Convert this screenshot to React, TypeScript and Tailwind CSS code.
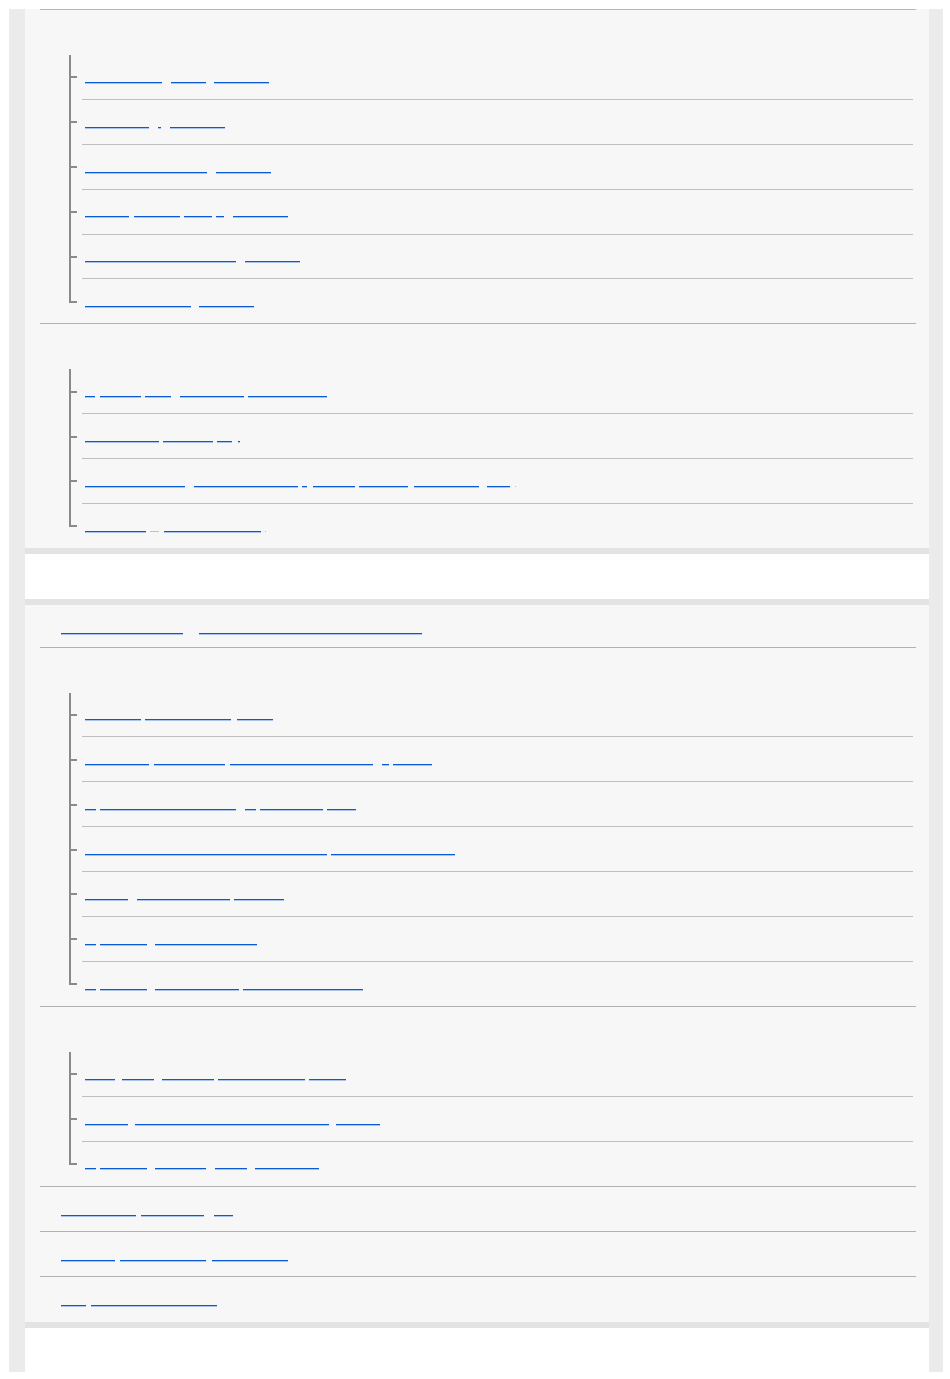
import React from "react";

type Seg = [number, number, number?];

function Underlines({ segs, origin }: { segs: Seg[]; origin: number }) {
  let prev = origin;
  return (
    <div className="flex h-px">
      {segs.map(([a, b, faint], i) => {
        const ml = a - prev;
        prev = b;
        return (
          <span
            key={i}
            className={
              faint
                ? "block h-px shrink-0 bg-[#a9c3ec]"
                : "block h-px shrink-0 bg-[#0a5ad3] shadow-[0_1px_0_#a9c5ef]"
            }
            style={{ marginLeft: ml, width: b - a }}
          />
        );
      })}
    </div>
  );
}

function TreeRow({ segs, last }: { segs: Seg[]; last: boolean }) {
  return (
    <div className={last ? "flex h-[43.9px]" : "flex h-[44.9px]"}>
      <div className="relative w-[42px] shrink-0">
        <div
          className={
            last
              ? "absolute left-[29px] top-0 h-[23.3px] w-[2px] bg-[#8a8a8a]"
              : "absolute left-[29px] top-0 bottom-0 w-[2px] bg-[#8a8a8a]"
          }
        />
        <div className="absolute left-[31px] top-[21.3px] h-[2px] w-[6px] bg-[#8a8a8a]" />
      </div>
      <div
        className={
          last ? "mr-[2.5px] flex-1" : "mr-[2.5px] flex-1 border-b border-[#bebebe]"
        }
      >
        <div className="pt-[26.8px]">
          <Underlines segs={segs} origin={82} />
        </div>
      </div>
    </div>
  );
}

function Section({ rows, border }: { rows: Seg[][]; border: boolean }) {
  return (
    <div className={border ? "border-b border-[#b2b2b2]" : ""}>
      <div className="h-[45px]" />
      {rows.map((r, i) => (
        <TreeRow key={i} segs={r} last={i === rows.length - 1} />
      ))}
    </div>
  );
}

function LinkItem({
  segs,
  border,
  h,
}: {
  segs: Seg[];
  border: boolean;
  h: "a" | "n" | "l";
}) {
  const hc = h === "a" ? "h-[42.7px]" : h === "l" ? "h-[45.3px]" : "h-[45px]";
  return (
    <div className={border ? `${hc} border-b border-[#b2b2b2]` : hc}>
      <div className="pt-[28.3px]">
        <Underlines segs={segs} origin={40} />
      </div>
    </div>
  );
}

const sec1: Seg[][] = [
  [[85, 162], [171, 206], [214, 269]],
  [[85, 149], [158, 161], [170, 225]],
  [[85, 207], [216, 271]],
  [[85, 129], [134, 180], [184, 212], [216, 224], [233, 288]],
  [[85, 236], [245, 300]],
  [[85, 191], [199, 254]],
];

const sec2: Seg[][] = [
  [[85, 95], [100, 141], [145, 171], [180, 244], [248, 327]],
  [[85, 159], [163, 213], [217, 232], [238, 240]],
  [[85, 185], [194, 298], [302, 307], [313, 355], [359, 408], [414, 479], [487, 510], [515, 516, 1]],
  [[85, 146], [150, 159, 1], [164, 261], [265, 266, 1]],
];

const sec3: Seg[][] = [
  [[85, 141], [145, 231], [237, 273]],
  [[85, 149], [154, 225], [230, 373], [382, 389], [393, 432]],
  [[85, 96], [100, 236], [245, 256], [260, 323], [327, 356]],
  [[85, 327], [331, 455]],
  [[85, 128], [137, 230], [234, 284]],
  [[85, 96], [100, 147], [155, 257]],
  [[85, 96], [100, 147], [155, 239], [243, 363]],
];

const sec4: Seg[][] = [
  [[85, 115], [122, 154], [162, 214], [218, 305], [309, 346]],
  [[85, 128], [135, 329], [336, 380]],
  [[85, 96], [100, 147], [155, 206], [215, 247], [255, 319]],
];

export default function App() {
  return (
    <div className="min-h-[1379px] w-[950px] bg-white pt-[9px] font-['Liberation_Sans',Arial,sans-serif]">
      <div className="ml-[9px] h-[1363px] w-[934px] border-l-[16px] border-r-[14px] border-[#ebebeb] bg-white">
        <div className="border-b-[6px] border-[#e3e3e3] bg-[#f7f7f7] pl-[15px] pr-[13.5px]">
          <div className="h-px bg-[#b8b8b8]" />
          <Section rows={sec1} border={true} />
          <Section rows={sec2} border={false} />
        </div>
        <div className="mt-[45px] border-y-[6px] border-[#e3e3e3] bg-[#f7f7f7] pl-[15px] pr-[13.5px]">
          <LinkItem segs={[[61, 183], [199, 422]]} border={true} h="a" />
          <Section rows={sec3} border={true} />
          <Section rows={sec4} border={true} />
          <LinkItem segs={[[61, 136], [141, 204], [214, 233]]} border={true} h="n" />
          <LinkItem segs={[[61, 115], [120, 206], [212, 288]]} border={true} h="n" />
          <LinkItem segs={[[61, 86], [91, 217]]} border={false} h="l" />
        </div>
      </div>
    </div>
  );
}
